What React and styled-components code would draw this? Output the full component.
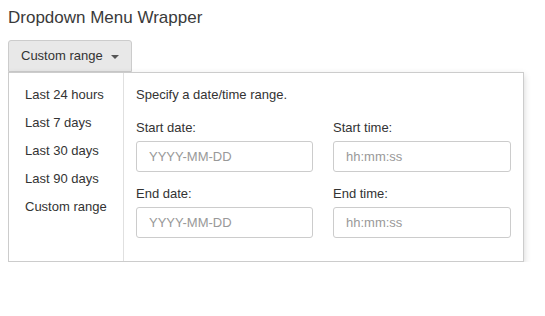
import React from 'react';
import styled, { createGlobalStyle } from 'styled-components';

const GlobalStyle = createGlobalStyle`
  body {
    margin: 8px;
    background: #fff;
    font-family: "Liberation Sans", Arial, sans-serif;
    color: #333;
  }
`;

const Title = styled.div`
  font-size: 17px;
  line-height: 1.2;
  color: #3a3a3a;
  margin-bottom: 12px;
`;

const Wrapper = styled.div`
  display: flex;
  flex-direction: column;
  align-items: flex-start;
`;

const ToggleButton = styled.button`
  display: inline-flex;
  align-items: center;
  height: 32px;
  padding: 6px 12px;
  font-family: inherit;
  font-size: 13px;
  line-height: 18px;
  color: #333;
  background: #e8e8e8;
  border: 1px solid #ccc;
  border-radius: 3px 3px 0 0;
  cursor: pointer;
`;

const Caret = styled.span`
  display: inline-block;
  width: 0;
  height: 0;
  margin-left: 8px;
  margin-top: 1px;
  border-top: 4px solid #555;
  border-left: 4px solid transparent;
  border-right: 4px solid transparent;
`;

const Panel = styled.div`
  display: flex;
  width: 516px;
  box-sizing: border-box;
  background: #fff;
  border: 1px solid #ccc;
  box-shadow: 0 3px 7px rgba(0, 0, 0, 0.18);
`;

const RangeList = styled.ul`
  list-style: none;
  margin: 0;
  padding: 8px 0 0;
  width: 114px;
  border-right: 1px solid #e0e0e0;
`;

const RangeItem = styled.li`
  padding: 5px 16px;
  font-size: 13px;
  line-height: 18px;
  color: #333;
  white-space: nowrap;
  cursor: pointer;
`;

const Pane = styled.div`
  flex: 1;
  padding: 13px 12px 23px;
  font-size: 13px;
  line-height: 18px;
`;

const Hint = styled.div`
  margin-bottom: 15px;
`;

const Grid = styled.div`
  display: grid;
  grid-template-columns: 177px 178px;
  column-gap: 20px;
  row-gap: 13px;
`;

const Field = styled.label`
  display: flex;
  flex-direction: column;
  gap: 4px;
`;

const Input = styled.input`
  box-sizing: border-box;
  height: 31px;
  width: 100%;
  padding: 0 12px;
  font-family: inherit;
  font-size: 13px;
  color: #333;
  border: 1px solid #ccc;
  border-radius: 3px;
  outline: none;

  &::placeholder {
    color: #999;
  }
`;

const ranges = ['Last 24 hours', 'Last 7 days', 'Last 30 days', 'Last 90 days', 'Custom range'];

const fields = [
  { label: 'Start date:', placeholder: 'YYYY-MM-DD' },
  { label: 'Start time:', placeholder: 'hh:mm:ss' },
  { label: 'End date:', placeholder: 'YYYY-MM-DD' },
  { label: 'End time:', placeholder: 'hh:mm:ss' },
];

const App = () => {
  return (
    <>
      <GlobalStyle />
      <Title>Dropdown Menu Wrapper</Title>
      <Wrapper>
        <ToggleButton type="button">
          Custom range
          <Caret />
        </ToggleButton>
        <Panel>
          <RangeList>
            {ranges.map(r => (
              <RangeItem key={r}>{r}</RangeItem>
            ))}
          </RangeList>
          <Pane>
            <Hint>Specify a date/time range.</Hint>
            <Grid>
              {fields.map(f => (
                <Field key={f.label}>
                  {f.label}
                  <Input type="text" placeholder={f.placeholder} />
                </Field>
              ))}
            </Grid>
          </Pane>
        </Panel>
      </Wrapper>
    </>
  );
};

export default App;
